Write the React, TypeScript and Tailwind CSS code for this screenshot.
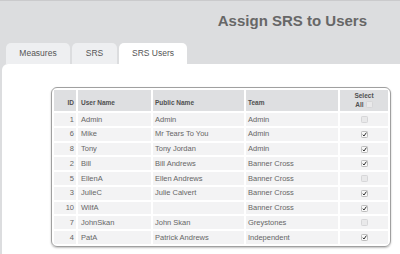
import React from 'react'

type Row = { id: number; user: string; pub: string; team: string; sel: boolean }

const ROWS: Row[] = [
  { id: 1, user: 'Admin', pub: 'Admin', team: 'Admin', sel: false },
  { id: 6, user: 'Mike', pub: 'Mr Tears To You', team: 'Admin', sel: true },
  { id: 8, user: 'Tony', pub: 'Tony Jordan', team: 'Admin', sel: true },
  { id: 2, user: 'Bill', pub: 'Bill Andrews', team: 'Banner Cross', sel: true },
  { id: 5, user: 'EllenA', pub: 'Ellen Andrews', team: 'Banner Cross', sel: false },
  { id: 3, user: 'JulieC', pub: 'Julie Calvert', team: 'Banner Cross', sel: true },
  { id: 10, user: 'WilfA', pub: '', team: 'Banner Cross', sel: true },
  { id: 7, user: 'JohnSkan', pub: 'John Skan', team: 'Greystones', sel: false },
  { id: 4, user: 'PatA', pub: 'Patrick Andrews', team: 'Independent', sel: true },
]

function Box({ checked }: { checked: boolean }) {
  return (
    <svg width="7" height="7" viewBox="0 0 7 7" className="inline-block align-middle">
      <rect
        x="0.5"
        y="0.5"
        width="6"
        height="6"
        rx="0.8"
        fill={checked ? '#f8f8f8' : '#e9e9ea'}
        stroke={checked ? '#bdbdbd' : '#d6d6d8'}
      />
      {checked && <path d="M1.8 3.7 L3 5 L5.4 1.6" fill="none" stroke="#2e2e2e" strokeWidth="1" />}
    </svg>
  )
}

function Tab({ label, active, w }: { label: string; active?: boolean; w: string }) {
  return (
    <div
      className={`${w} h-[21px] rounded-t-[5px] flex items-center justify-center text-[8.5px] text-[#555] ${
        active ? 'bg-white' : 'bg-[#eeeff1]'
      }`}
    >
      {label}
    </div>
  )
}

export default function App() {
  return (
    <div className="w-[400px] h-[254px] overflow-hidden bg-[#dcdddf] border-t border-[#cacacc] flex flex-col font-['Liberation_Sans',Arial,sans-serif]">
      <div className="h-[42px] flex justify-end pr-[33px] pt-[11px]">
        <h1 className="text-[15px] leading-[18px] font-bold text-[#676767]">Assign SRS to Users</h1>
      </div>

      <div className="flex gap-[2px] pl-[6px]">
        <Tab label="Measures" w="w-[64px]" />
        <Tab label="SRS" w="w-[45px]" />
        <Tab label="SRS Users" active w="w-[68px]" />
      </div>

      <div className="flex-1 ml-[2px] bg-white rounded-tl-[6px] pt-[23px] pl-[49px]">
        <div className="w-[340px] border border-[#a0a0a0] rounded-[6px] shadow-[0_1px_2px_rgba(0,0,0,0.25)] overflow-hidden">
          <table className="w-full border-separate border-spacing-[2px] text-[7.5px] text-[#666] table-fixed">
            <colgroup>
              <col className="w-[22px]" />
              <col className="w-[73px]" />
              <col className="w-[91px]" />
              <col className="w-[92px]" />
              <col />
            </colgroup>
            <thead>
              <tr className="h-[21px] text-[6.5px] font-bold text-[#505050]">
                <th className="bg-[#dedfe1] align-bottom text-right pr-[2px] pb-[3px]">ID</th>
                <th className="bg-[#dedfe1] align-bottom text-left pl-[3px] pb-[3px]">User Name</th>
                <th className="bg-[#dedfe1] align-bottom text-left pl-[2px] pb-[3px]">Public Name</th>
                <th className="bg-[#dedfe1] align-bottom text-left pl-[2px] pb-[3px]">Team</th>
                <th className="bg-[#dedfe1] align-bottom text-center pb-[2px] leading-[9px]">
                  <div>Select</div>
                  <div className="flex items-center justify-center gap-[2px]">
                    All <Box checked={false} />
                  </div>
                </th>
              </tr>
            </thead>
            <tbody>
              {ROWS.map((r) => (
                <tr key={r.id} className="h-[12.75px]">
                  <td className="bg-[#f3f3f4] text-right pr-[2px] leading-none">{r.id}</td>
                  <td className="bg-[#f3f3f4] pl-[3px] leading-none whitespace-nowrap">{r.user}</td>
                  <td className="bg-[#f3f3f4] pl-[2px] leading-none whitespace-nowrap">{r.pub}</td>
                  <td className="bg-[#f3f3f4] pl-[2px] leading-none whitespace-nowrap">{r.team}</td>
                  <td className="bg-[#f3f3f4] text-center leading-none">
                    <Box checked={r.sel} />
                  </td>
                </tr>
              ))}
            </tbody>
          </table>
        </div>
      </div>
    </div>
  )
}
